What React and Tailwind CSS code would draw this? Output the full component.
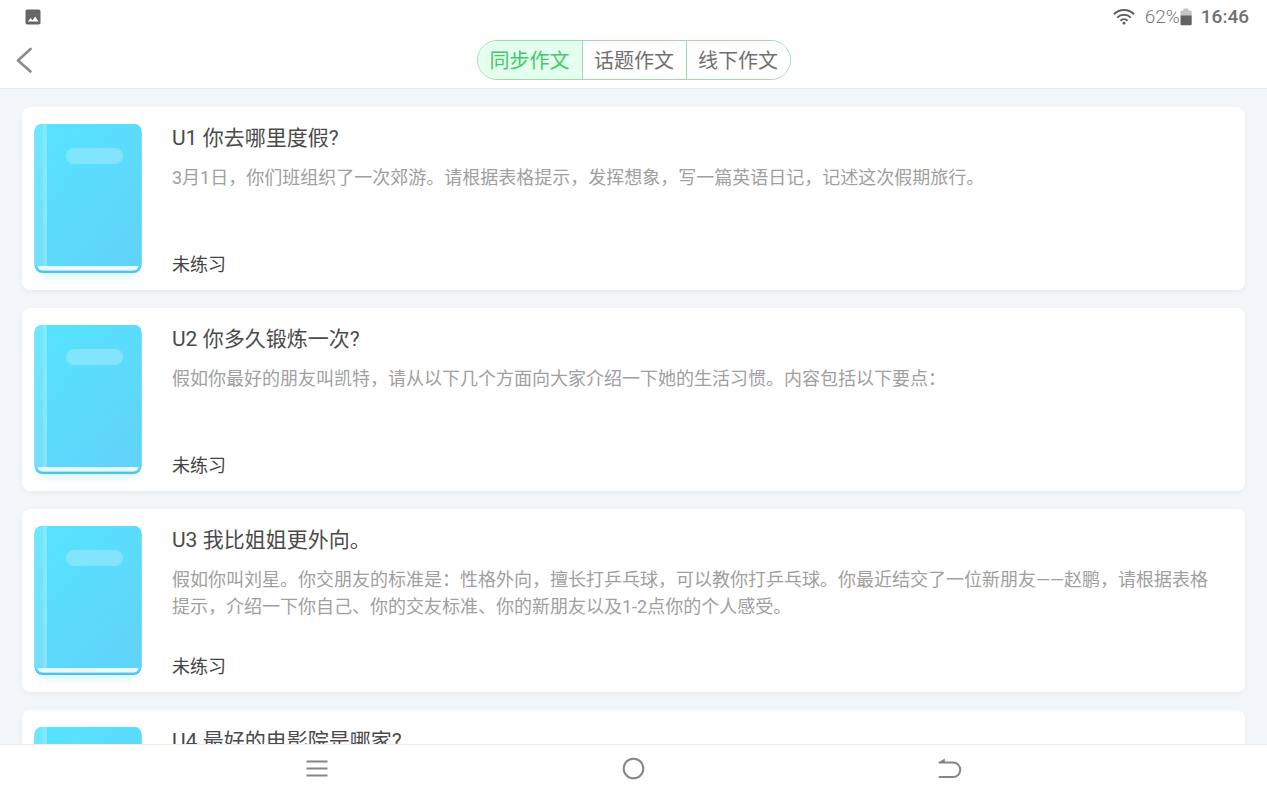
import React, { useState } from 'react'
import clsx from 'clsx'

const tabs = ['同步作文', '话题作文', '线下作文']

const lessons = [
  {
    id: 1,
    title: 'U1 你去哪里度假?',
    desc: '3月1日，你们班组织了一次郊游。请根据表格提示，发挥想象，写一篇英语日记，记述这次假期旅行。',
    status: '未练习',
  },
  {
    id: 2,
    title: 'U2 你多久锻炼一次?',
    desc: '假如你最好的朋友叫凯特，请从以下几个方面向大家介绍一下她的生活习惯。内容包括以下要点：',
    status: '未练习',
  },
  {
    id: 3,
    title: 'U3 我比姐姐更外向。',
    desc: '假如你叫刘星。你交朋友的标准是：性格外向，擅长打乒乓球，可以教你打乒乓球。你最近结交了一位新朋友——赵鹏，请根据表格提示，介绍一下你自己、你的交友标准、你的新朋友以及1-2点你的个人感受。',
    status: '未练习',
  },
  {
    id: 4,
    title: 'U4 最好的电影院是哪家?',
  },
]

function StatusBar() {
  return (
    <div className="flex h-8 items-center pl-[25px] pr-[18px] pt-px text-[19px] leading-8 text-[#707070]">
      <svg className="h-4 w-4" viewBox="0 0 16 16" aria-hidden="true">
        <rect x="0.5" y="0.5" width="15" height="15" rx="1.8" fill="#666" />
        <path d="M2.8 12.6 5.6 9l1.9 2.2L10.2 7.6l3.4 5z" fill="#fff" />
      </svg>
      <div className="ml-auto flex items-center">
        <svg className="h-4 w-[22px]" viewBox="0 0 22 16" fill="none" stroke="#5f5f5f" strokeWidth="2" aria-hidden="true">
          <path d="M0.9 5.2C6.6-0.3 15.4-0.3 21.1 5.2" />
          <path d="M4.2 8.6C8 4.9 14 4.9 17.8 8.6" />
          <path d="M7.4 11.7c2-1.9 5.2-1.9 7.2 0" />
          <circle cx="11" cy="14.2" r="1.4" fill="#5f5f5f" stroke="none" />
        </svg>
        <span className="ml-[10px] font-light text-[#7a7a7a]">62%</span>
        <svg className="h-[18px] w-3" viewBox="0 0 12 18" aria-hidden="true">
          <path d="M3.5 0.5h5v2h2.2q1 0 1 1V8H0.5V3.5q0-1 1-1h2z" fill="#c4c4c4" />
          <path d="M0.5 7.5h11.2v8.7q0 1-1 1H1.5q-1 0-1-1z" fill="#636363" />
        </svg>
        <span className="ml-[9px] font-medium">16:46</span>
      </div>
    </div>
  )
}

function BookCover() {
  return (
    <svg className="h-[154px] w-[108px] shrink-0 overflow-visible" viewBox="0 0 108 154" aria-hidden="true">
      <defs>
        <linearGradient id="cover" x1="0" y1="0" x2="0.8" y2="1">
          <stop offset="0" stopColor="#55e4ff" />
          <stop offset="0.5" stopColor="#5cdcfd" />
          <stop offset="1" stopColor="#60d3f9" />
        </linearGradient>
        <filter id="glow" x="-20%" y="-20%" width="140%" height="140%">
          <feGaussianBlur stdDeviation="4" />
        </filter>
      </defs>
      <rect x="4" y="20" width="100" height="132" rx="7" fill="#5cdcfd" opacity="0.3" filter="url(#glow)" />
      <rect x="0.5" width="107" height="149" rx="8" fill="#56bfe2" />
      <rect x="0.5" width="107" height="147" rx="7" fill="url(#cover)" />
      <path d="M3.5 142h101q-1 4.5-6 4.5h-89q-5 0-6-4.5z" fill="#e6faff" />
      <path d="M0.5 7q0-7 7-7H9v142H0.5z" fill="#fff" opacity="0.14" />
      <rect x="9" width="4" height="142" fill="#fff" opacity="0.26" />
      <rect x="32" y="24" width="57" height="16" rx="8" fill="#fff" opacity="0.24" />
    </svg>
  )
}

function LessonCard({ lesson }) {
  return (
    <li>
      <a href="#" className="flex gap-[30px] rounded-lg bg-white px-3 pt-[17px] pb-3 shadow-[0_2px_6px_rgba(0,0,0,0.05)]">
        <BookCover />
        <div className="flex min-w-0 flex-1 flex-col pr-5">
          <h2 className="text-[21px] leading-7 text-[#4a4a4a]">{lesson.title}</h2>
          {lesson.desc && <p className="mt-3 text-lg leading-[27px] text-[#a0a0a0]">{lesson.desc}</p>}
          {lesson.status && <span className="mt-auto text-lg leading-[27px] text-[#444]">{lesson.status}</span>}
        </div>
      </a>
    </li>
  )
}

export default function App() {
  const [active, setActive] = useState(0)

  return (
    <div className="flex h-screen flex-col overflow-hidden bg-[#f3f7fa] font-[Roboto,'Noto_Sans_CJK_SC',sans-serif]">
      <header className="shrink-0 border-b border-[#e3e9ee] bg-white">
        <StatusBar />
        <div className="grid h-14 grid-cols-[1fr_auto_1fr] items-center">
          <button type="button" aria-label="返回" className="ml-4 justify-self-start">
            <svg className="h-[26px] w-4" viewBox="0 0 16 26" fill="none" stroke="#8b8b8b" strokeWidth="2.6" strokeLinecap="round" strokeLinejoin="round">
              <path d="M14.5 2 2 13.5l12.5 11" />
            </svg>
          </button>
          <div className="flex h-10 overflow-hidden rounded-full border border-[#9adcb0]">
            {tabs.map((tab, i) => (
              <button
                key={tab}
                type="button"
                onClick={() => setActive(i)}
                className={clsx(
                  'w-[104px] pt-0.5 text-xl',
                  i > 0 && 'border-l border-[#9adcb0]',
                  active === i ? 'bg-[#e4ffed] text-[#3fc96b]' : 'bg-white text-[#707070]'
                )}
              >
                {tab}
              </button>
            ))}
          </div>
        </div>
      </header>

      <main className="min-h-0 flex-1 overflow-y-auto px-[22px] pt-[18px] [scrollbar-width:none]">
        <ul className="flex flex-col gap-[18px]">
          {lessons.map((lesson) => (
            <LessonCard key={lesson.id} lesson={lesson} />
          ))}
        </ul>
      </main>

      <nav className="h-12 shrink-0 border-t border-[#e8ebee] bg-white">
        <div className="mx-auto flex h-full w-3/4">
          <button type="button" aria-label="菜单" className="flex flex-1 items-center justify-center">
            <svg className="h-6 w-6" viewBox="0 0 24 24" fill="none" stroke="#858585" strokeWidth="2">
              <path d="M1.5 4.5h21M1.5 11.5h21M1.5 18.5h21" />
            </svg>
          </button>
          <button type="button" aria-label="主页" className="flex flex-1 items-center justify-center">
            <svg className="h-6 w-6" viewBox="0 0 24 24" fill="none" stroke="#858585" strokeWidth="2">
              <circle cx="11.5" cy="11.5" r="9.8" />
            </svg>
          </button>
          <button type="button" aria-label="后退" className="flex flex-1 items-center justify-center">
            <svg className="h-6 w-6" viewBox="0 0 24 24" fill="none" stroke="#858585" strokeWidth="2" strokeLinecap="round">
              <path d="M1.5 5.5H15a7.3 7.3 0 0 1 0 14.6H1.5" />
              <path d="M0.8 5.2 6.8 1.6v3.6z" fill="#858585" stroke="none" />
            </svg>
          </button>
        </div>
      </nav>
    </div>
  )
}
